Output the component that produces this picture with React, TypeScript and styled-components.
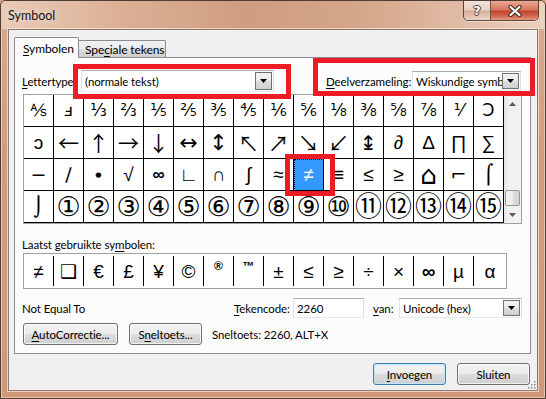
import React from "react";
import styled, { createGlobalStyle, css } from "styled-components";

const GlobalStyle = createGlobalStyle`
  html, body { margin: 0; padding: 0; background: #d3a184; }
  body {
    width: 546px; height: 399px; overflow: hidden;
    font-family: Lato, "Noto Sans", sans-serif;
    font-size: 11.5px; letter-spacing: -0.1px; color: #000;
  }
  * { box-sizing: border-box; }
`;

const Window = styled.div`
  position: relative;
  width: 546px;
  height: 399px;
  display: flex;
  flex-direction: column;
  padding: 0 7px 7px;
  border: 1px solid #4e3d33;
  border-radius: 6px 6px 0 0;
  background: linear-gradient(180deg, #d9ab8f 0%, #d19c7c 40%, #cf9878 100%);
  box-shadow: inset 0 0 0 1px rgba(255, 236, 222, 0.55);
`;

const TitleBar = styled.div`
  height: 28px;
  margin: 0 -7px;
  padding: 0 6px 0 7px;
  display: flex;
  align-items: flex-start;
  border-radius: 5px 5px 0 0;
  background: linear-gradient(90deg, #e8cbb7 0%, #dcb096 22%, #cf9d7f 45%, #d4a588 65%, #e1bca6 85%, #ead1c0 100%);
`;

const Title = styled.div`
  padding-top: 7px;
  font-size: 12.5px;
  letter-spacing: 0;
  color: #111;
  text-shadow: 0 0 6px rgba(255, 255, 255, 0.8);
`;

const Captions = styled.div`
  margin-left: auto;
  display: flex;
  height: 20px;
  border: 1px solid #5a463b;
  border-top: none;
  border-radius: 0 0 5px 5px;
  overflow: hidden;
  box-shadow: 0 1px 0 rgba(255, 240, 230, 0.6);
`;

const HelpButton = styled.div`
  width: 27px;
  display: flex;
  align-items: center;
  justify-content: center;
  border-right: 1px solid #6b5448;
  background: linear-gradient(180deg, rgba(255,255,255,0.55) 0%, rgba(255,255,255,0.25) 48%, rgba(150,110,90,0.2) 52%, rgba(255,255,255,0.3) 100%);
  font-family: "DejaVu Sans", sans-serif;
  font-weight: bold;
  font-size: 13px;
  color: #fff;
  text-shadow: -1px 0 #4a3a35, 1px 0 #4a3a35, 0 -1px #4a3a35, 0 1px #4a3a35;
`;

const CloseButton = styled.div`
  width: 47px;
  display: flex;
  align-items: center;
  justify-content: center;
  background: linear-gradient(180deg, #e9a996 0%, #d9765f 45%, #c4442c 55%, #d16a50 80%, #e29a80 100%);
`;

const Client = styled.div`
  position: relative;
  flex: 1;
  display: flex;
  flex-direction: column;
  background: #f0f0f0;
  border: 1px solid #8a7a70;
  box-shadow: 0 0 0 1px rgba(255, 232, 218, 0.7);
  padding: 7px 6px 0 5px;
`;

const TabStrip = styled.div`
  display: flex;
  align-items: flex-end;
  height: 21px;
  margin-bottom: -1px;
  position: relative;
  z-index: 1;
`;

const Tab = styled.div<{ $active?: boolean }>`
  display: flex;
  align-items: center;
  white-space: nowrap;
  border: 1px solid #898c95;
  border-bottom: none;
  border-radius: 2px 2px 0 0;
  font-size: 12px;
  ${(p) =>
    p.$active
      ? css`
          height: 21px;
          width: 65px;
          padding-left: 8px;
          background: #fcfcfc;
        `
      : css`
          height: 17px;
          width: 88px;
          margin-bottom: 1px;
          margin-left: -1px;
          padding-left: 6px;
          background: linear-gradient(180deg, #f2f2f2 0%, #ebebeb 50%, #dddddd 51%, #cfcfcf 100%);
        `}
`;

const Panel = styled.div`
  height: 297px;
  border: 1px solid #898c95;
  background: #fcfcfc;
  display: flex;
  flex-direction: column;
  padding-left: 7px;
`;

const Key = styled.span`
  text-decoration: underline;
  text-underline-offset: 2px;
`;

const FontRow = styled.div`
  display: flex;
  align-items: center;
  height: 22px;
  margin-top: 12px;
`;

const Label = styled.div<{ $w?: number; $ml?: number }>`
  width: ${(p) => (p.$w ? `${p.$w}px` : "auto")};
  margin-left: ${(p) => p.$ml ?? 0}px;
  white-space: nowrap;
  flex-shrink: 0;
`;

const Combo = styled.div<{ $w: number; $h: number }>`
  width: ${(p) => p.$w}px;
  height: ${(p) => p.$h}px;
  display: flex;
  align-items: stretch;
  background: #fff;
  border: 1px solid #abadb3;
  border-left-color: #e2e3ea;
  border-right-color: #dbdfe6;
  border-bottom-color: #e3e9ef;
  padding: 1px;
  flex-shrink: 0;
`;

const ComboText = styled.div`
  flex: 1;
  padding-left: 2px;
  display: flex;
  align-items: center;
  white-space: nowrap;
  overflow: hidden;
`;

const ComboButton = styled.div`
  width: 17px;
  flex-shrink: 0;
  display: flex;
  align-items: center;
  justify-content: center;
  border: 1px solid #707070;
  background: linear-gradient(180deg, #f2f2f2 0%, #ebebeb 50%, #dddddd 51%, #cfcfcf 100%);
`;

const GridFrame = styled.div`
  display: flex;
  width: 499px;
  margin: 2px 0 0 1px;
  border: 1px solid #a0a0a0;
  background: #fff;
`;

const SymbolGrid = styled.div`
  display: grid;
  grid-template-columns: repeat(16, 30px);
  grid-auto-rows: 32px;
`;

type GlyphFont = "dv" | "lib" | "cjk";

const fontStacks: Record<GlyphFont, string> = {
  dv: `"DejaVu Sans", "Noto Sans CJK SC", sans-serif`,
  lib: `"Liberation Sans", "DejaVu Sans", sans-serif`,
  cjk: `"Noto Sans CJK SC", "DejaVu Sans", sans-serif`,
};

const Cell = styled.div<{ $selected?: boolean; $size: number; $font: GlyphFont; $bold?: boolean }>`
  display: flex;
  align-items: center;
  justify-content: center;
  border-right: 1px solid #000;
  border-bottom: 1px solid #000;
  font-family: ${(p) => fontStacks[p.$font]};
  font-size: ${(p) => p.$size}px;
  font-weight: ${(p) => (p.$bold ? "bold" : "normal")};
  letter-spacing: 0;
  line-height: 1;
  background: ${(p) => (p.$selected ? "#3399ff" : "#fff")};
  color: ${(p) => (p.$selected ? "#fff" : "#000")};
  ${(p) =>
    p.$selected &&
    css`
      outline: 1px dotted #000;
      outline-offset: -1px;
    `}
`;

const ScrollBar = styled.div`
  width: 17px;
  display: flex;
  flex-direction: column;
  background: linear-gradient(90deg, #e3e3e3 0%, #f1f1f1 30%, #f1f1f1 100%);
`;

const ScrollArrow = styled.div`
  height: 17px;
  display: flex;
  align-items: center;
  justify-content: center;
`;

const ScrollTrack = styled.div`
  flex: 1;
  display: flex;
  flex-direction: column;
  justify-content: flex-end;
  padding: 0 1px;
`;

const Thumb = styled.div`
  height: 16px;
  border: 1px solid #979797;
  border-radius: 2px;
  background: linear-gradient(90deg, #f3f3f3 0%, #ececec 50%, #dcdcdc 51%, #d4d4d4 100%);
`;

const SectionLabel = styled.div`
  margin-top: 13px;
  line-height: 15px;
`;

const RecentFrame = styled.div`
  width: 484px;
  height: 36px;
  margin: 1px 0 0 1px;
  border: 1px solid #a0a0a0;
  background: #fff;
  display: grid;
  grid-template-columns: repeat(15, 30px) 1fr;
  padding: 2px 0;
`;

const RecentCell = styled.div<{ $last?: boolean; $raised?: boolean; $bold?: boolean }>`
  display: flex;
  align-items: ${(p) => (p.$raised ? "flex-start" : "center")};
  padding-top: ${(p) => (p.$raised ? 4 : 0)}px;
  justify-content: center;
  border-right: ${(p) => (p.$last ? "none" : "1px solid #000")};
  font-family: "Liberation Sans", "DejaVu Sans", "Noto Sans CJK SC", sans-serif;
  font-size: ${(p) => (p.$raised ? 12 : 19)}px;
  font-weight: ${(p) => (p.$raised || p.$bold ? "bold" : "normal")};
  letter-spacing: 0;
  line-height: 1;
`;

const InfoRow = styled.div`
  display: flex;
  align-items: center;
  height: 20px;
  margin-top: 9px;
`;

const TextInput = styled.div<{ $w: number }>`
  width: ${(p) => p.$w}px;
  height: 20px;
  background: #fff;
  border: 1px solid #abadb3;
  border-left-color: #e2e3ea;
  border-right-color: #dbdfe6;
  border-bottom-color: #e3e9ef;
  padding-left: 3px;
  display: flex;
  align-items: center;
  flex-shrink: 0;
`;

const ButtonRow = styled.div`
  display: flex;
  align-items: center;
  margin-top: 5px;
  padding-left: 1px;
`;

const Button = styled.div<{ $w: number; $default?: boolean; $ml?: number }>`
  width: ${(p) => p.$w}px;
  height: 22px;
  margin-left: ${(p) => p.$ml ?? 0}px;
  display: flex;
  align-items: center;
  justify-content: center;
  border: 1px solid ${(p) => (p.$default ? "#3c7fb1" : "#707070")};
  border-radius: 3px;
  background: linear-gradient(180deg, #f2f2f2 0%, #ebebeb 50%, #dddddd 51%, #cfcfcf 100%);
  box-shadow: inset 0 0 0 1px ${(p) => (p.$default ? "#c1e6f9" : "rgba(255,255,255,0.7)")};
  white-space: nowrap;
  flex-shrink: 0;
`;

const Footer = styled.div`
  display: flex;
  justify-content: flex-end;
  gap: 11px;
  margin-top: 9px;
  padding-right: 1px;
`;

const Grip = styled.svg`
  position: absolute;
  right: 1px;
  bottom: 1px;
`;

const Annotation = styled.div<{ $x: number; $y: number; $w: number; $h: number }>`
  position: absolute;
  left: ${(p) => p.$x}px;
  top: ${(p) => p.$y}px;
  width: ${(p) => p.$w}px;
  height: ${(p) => p.$h}px;
  border: 5px solid #ed1c24;
  pointer-events: none;
  z-index: 5;
`;

const DownTriangle = ({ color = "#000" }: { color?: string }) => (
  <svg width="7" height="4" viewBox="0 0 7 4">
    <path d="M0 0H7L3.5 4Z" fill={color} />
  </svg>
);

const UpTriangle = ({ color = "#000" }: { color?: string }) => (
  <svg width="7" height="4" viewBox="0 0 7 4">
    <path d="M0 4H7L3.5 0Z" fill={color} />
  </svg>
);

const gridRows: string[][] = [
  ["⅍", "ⅎ", "⅓", "⅔", "⅕", "⅖", "⅗", "⅘", "⅙", "⅚", "⅛", "⅜", "⅝", "⅞", "⅟", "Ↄ"],
  ["ↄ", "←", "↑", "→", "↓", "↔", "↕", "↖", "↗", "↘", "↙", "↨", "∂", "∆", "∏", "∑"],
  ["−", "∕", "∙", "√", "∞", "∟", "∩", "∫", "≈", "≠", "≡", "≤", "≥", "⌂", "⌐", "⌠"],
  ["⌡", "①", "②", "③", "④", "⑤", "⑥", "⑦", "⑧", "⑨", "⑩", "⑪", "⑫", "⑬", "⑭", "⑮"],
];

type GlyphStyle = { size: number; font: GlyphFont; bold?: boolean };

const glyphStyle = (r: number, c: number): GlyphStyle => {
  if (r === 3 && c > 0) return { size: 27, font: "dv" };
  if (r === 0) return { size: 17, font: "dv" };
  if (r === 1 && (c === 5 || c === 6)) return { size: 22, font: "dv" };
  if (r === 1 && c >= 1 && c <= 10) return { size: 21, font: "cjk" };
  if (r === 1 && c === 11) return { size: 20, font: "dv" };
  if (r === 2 && c === 4) return { size: 17, font: "lib", bold: true };
  if (r === 2 && c === 13) return { size: 26, font: "dv" };
  if (r === 2 && (c === 0 || c === 1 || c === 2 || c === 14 || c === 15)) return { size: 19, font: "dv" };
  if (r === 3 && c === 0) return { size: 19, font: "dv" };
  return { size: 19, font: "lib" };
};

const recent = ["≠", "❑", "€", "£", "¥", "©", "®", "™", "±", "≤", "≥", "÷", "×", "∞", "µ", "α"];

export default function App() {
  return (
    <>
      <GlobalStyle />
      <Window>
        <TitleBar>
          <Title>Symbool</Title>
          <Captions>
            <HelpButton>?</HelpButton>
            <CloseButton>
              <svg width="14" height="12" viewBox="0 0 14 12">
                <path d="M2.5 2L11.5 10M11.5 2L2.5 10" stroke="#3b2a25" strokeWidth="4.2" strokeLinecap="round" />
                <path d="M2.5 2L11.5 10M11.5 2L2.5 10" stroke="#fff" strokeWidth="2.2" strokeLinecap="round" />
              </svg>
            </CloseButton>
          </Captions>
        </TitleBar>
        <Client>
          <TabStrip>
            <Tab $active>
              <span>
                <Key>S</Key>ymbolen
              </span>
            </Tab>
            <Tab>
              <span>
                Spe<Key>c</Key>iale tekens
              </span>
            </Tab>
          </TabStrip>
          <Panel>
            <FontRow>
              <Label $w={59}>
                <Key>L</Key>ettertype:
              </Label>
              <Combo $w={193} $h={22}>
                <ComboText>(normale tekst)</ComboText>
                <ComboButton>
                  <DownTriangle />
                </ComboButton>
              </Combo>
              <Label $w={86} $ml={52}>
                <Key>D</Key>eelverzameling:
              </Label>
              <Combo $w={109} $h={20}>
                <ComboText>Wiskundige symbolen</ComboText>
                <ComboButton>
                  <DownTriangle />
                </ComboButton>
              </Combo>
            </FontRow>
            <GridFrame>
              <SymbolGrid>
                {gridRows.map((row, r) =>
                  row.map((ch, c) => {
                    const g = glyphStyle(r, c);
                    return (
                      <Cell
                        key={`${r}-${c}`}
                        $size={g.size}
                        $font={g.font}
                        $bold={g.bold}
                        $selected={r === 2 && c === 9}
                      >
                        {ch}
                      </Cell>
                    );
                  })
                )}
              </SymbolGrid>
              <ScrollBar>
                <ScrollArrow>
                  <UpTriangle color="#5a5a5a" />
                </ScrollArrow>
                <ScrollTrack>
                  <Thumb />
                </ScrollTrack>
                <ScrollArrow>
                  <DownTriangle color="#5a5a5a" />
                </ScrollArrow>
              </ScrollBar>
            </GridFrame>
            <SectionLabel>
              Laatst gebruikte sy<Key>m</Key>bolen:
            </SectionLabel>
            <RecentFrame>
              {recent.map((ch, i) => (
                <RecentCell
                  key={i}
                  $last={i === recent.length - 1}
                  $raised={ch === "®" || ch === "™"}
                  $bold={ch === "∞"}
                >
                  {ch}
                </RecentCell>
              ))}
            </RecentFrame>
            <InfoRow>
              <Label $w={212}>Not Equal To</Label>
              <Label $w={59}>
                <Key>T</Key>ekencode:
              </Label>
              <TextInput $w={71}>2260</TextInput>
              <Label $w={26} $ml={9}>
                <Key>v</Key>an:
              </Label>
              <Combo $w={123} $h={20}>
                <ComboText>Unicode (hex)</ComboText>
                <ComboButton>
                  <DownTriangle />
                </ComboButton>
              </Combo>
            </InfoRow>
            <ButtonRow>
              <Button $w={95}>
                <span>
                  <Key>A</Key>utoCorrectie...
                </span>
              </Button>
              <Button $w={73} $ml={11}>
                <span>
                  S<Key>n</Key>eltoets...
                </span>
              </Button>
              <Label $ml={10}>Sneltoets: 2260, ALT+X</Label>
            </ButtonRow>
          </Panel>
          <Footer>
            <Button $w={73} $default>
              <span>
                <Key>I</Key>nvoegen
              </span>
            </Button>
            <Button $w={73}>Sluiten</Button>
          </Footer>
          <Grip width="10" height="10" viewBox="0 0 10 10">
            {[
              [8, 2],
              [8, 5],
              [5, 5],
              [8, 8],
              [5, 8],
              [2, 8],
            ].map(([x, y], i) => (
              <rect key={i} x={x} y={y} width="1.5" height="1.5" fill="#8a8a8a" />
            ))}
          </Grip>
        </Client>
        <Annotation $x={72} $y={63} $w={218} $h={35} />
        <Annotation $x={312} $y={57} $w={222} $h={38} />
        <Annotation $x={284} $y={153} $w={50} $h={42} />
      </Window>
    </>
  );
}
